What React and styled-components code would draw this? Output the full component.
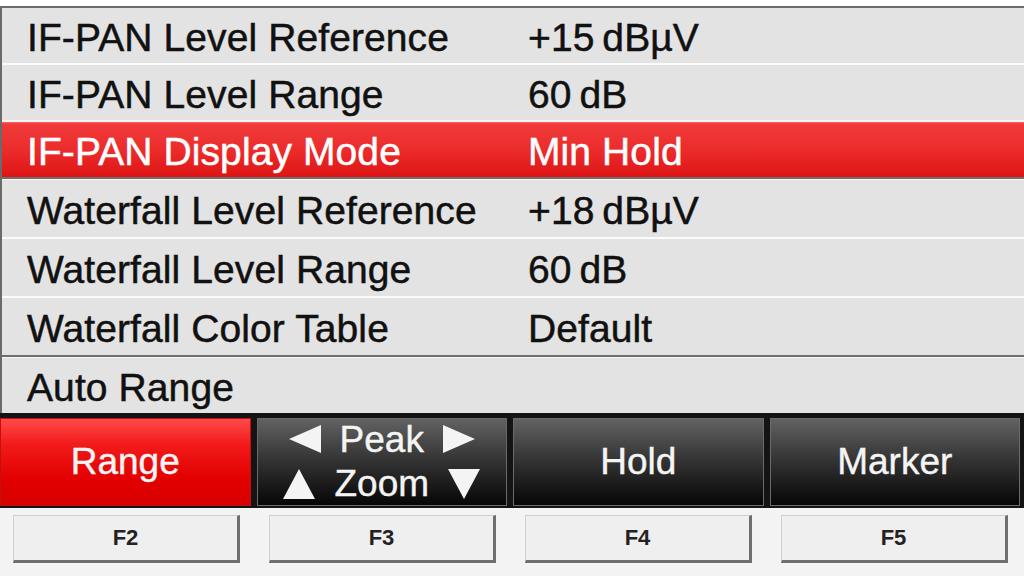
import React from "react";
import styled, { createGlobalStyle, css } from "styled-components";

const GlobalStyle = createGlobalStyle`
  html, body {
    margin: 0;
    padding: 0;
    background: #ffffff;
  }
  body {
    font-family: "Liberation Sans", Arial, sans-serif;
  }
`;

const Screen = styled.div`
  width: 1024px;
  height: 576px;
  overflow: hidden;
  display: flex;
  flex-direction: column;
  box-sizing: border-box;
  background: #f3f3f3;
  border-top: 6px solid #ffffff;
  & > * {
    flex-shrink: 0;
  }
`;

const Menu = styled.div`
  border-top: 2px solid #6c6c6c;
  border-left: 2px solid #6a6a6a;
  background: #e3e3e3;
`;

const Group = styled.div`
  ${p =>
    p.divided &&
    css`
      border-top: 2px solid #6e6e6e;
      padding-top: 1px;
      background: #f6f6f6;
    `}
`;

const Row = styled.div`
  display: grid;
  grid-template-columns: 501px 1fr;
  align-items: center;
  height: ${p => p.h}px;
  padding-left: 25px;
  padding-top: 5px;
  box-sizing: content-box;
  font-size: 39px;
  letter-spacing: 0.1px;
  -webkit-text-stroke: 0.5px currentColor;
  color: #111;
  background: #e3e3e3;
  border-top: ${p => (p.sep ? "2px solid #fbfbfb" : "none")};
  ${p =>
    p.active &&
    css`
      color: #fff;
      border-top-color: #f4f4f4;
      background: linear-gradient(#f66 0, #f03a3a 2px, #ec2c2c 50%, #de1414 100%);
    `}
`;

const SoftkeyBar = styled.div`
  display: grid;
  grid-template-columns: repeat(4, 1fr);
  grid-template-rows: 88px;
  gap: 6px;
  height: 95px;
  padding: 5px 4px 2px 0;
  box-sizing: border-box;
  background: #141414;
`;

const Softkey = styled.div`
  display: flex;
  flex-direction: column;
  align-items: center;
  justify-content: center;
  overflow: hidden;
  color: #f4f4f4;
  font-size: 37px;
  line-height: 44px;
  -webkit-text-stroke: 0.4px currentColor;
  box-sizing: border-box;
  border: 1px solid #6a6a6a;
  background: linear-gradient(#626262 0%, #363636 45%, #060606 100%);
  ${p =>
    p.active &&
    css`
      border-color: #c01010;
      background: linear-gradient(#ff4a4a 0%, #f21a1a 30%, #e20000 70%, #d80000 100%);
    `}
`;

const KeyLine = styled.div`
  display: flex;
  align-items: center;
  gap: 19px;
`;

const FKeyRow = styled.div`
  display: grid;
  grid-template-columns: repeat(4, 1fr);
  padding-top: 7px;
`;

const FKey = styled.div`
  margin: 0 16px 0 13px;
  height: 48px;
  box-sizing: border-box;
  display: flex;
  align-items: center;
  justify-content: center;
  background: #efefef;
  border-top: 1px solid #cfcfcf;
  border-left: 1px solid #cfcfcf;
  border-right: 3px solid #6f6f6f;
  border-bottom: 3px solid #6f6f6f;
  font-size: 22px;
  font-weight: bold;
  color: #222;
`;

const Tri = ({ dir }) => {
  const pts = {
    left: "0,14 32,0 32,28",
    right: "0,0 32,14 0,28",
    up: "16,0 32,30 0,30",
    down: "0,0 32,0 16,30"
  }[dir];
  return (
    <svg width="32" height="30" viewBox="0 0 32 30">
      <polygon points={pts} fill="#f4f4f4" />
    </svg>
  );
};

const groups = [
  {
    h: 50,
    rows: [
      ["IF-PAN Level Reference", "+15\u2009dBµV"],
      ["IF-PAN Level Range", "60\u2009dB"],
      ["IF-PAN Display Mode", "Min Hold", true]
    ]
  },
  {
    h: 52,
    rows: [
      ["Waterfall Level Reference", "+18\u2009dBµV"],
      ["Waterfall Level Range", "60\u2009dB"],
      ["Waterfall Color Table", "Default"]
    ]
  },
  { h: 50, rows: [["Auto Range", ""]] }
];

const App = () => (
  <>
    <GlobalStyle />
    <Screen>
      <Menu>
        {groups.map((g, gi) => (
          <Group key={gi} divided={gi > 0}>
            {g.rows.map(([label, value, active], ri) => (
              <Row key={label} active={active} sep={ri > 0} h={g.h}>
                <span>{label}</span>
                <span>{value}</span>
              </Row>
            ))}
          </Group>
        ))}
      </Menu>
      <SoftkeyBar>
        <Softkey active>Range</Softkey>
        <Softkey>
          <KeyLine>
            <Tri dir="left" />
            Peak
            <Tri dir="right" />
          </KeyLine>
          <KeyLine>
            <Tri dir="up" />
            Zoom
            <Tri dir="down" />
          </KeyLine>
        </Softkey>
        <Softkey>Hold</Softkey>
        <Softkey>Marker</Softkey>
      </SoftkeyBar>
      <FKeyRow>
        {["F2", "F3", "F4", "F5"].map(k => (
          <FKey key={k}>{k}</FKey>
        ))}
      </FKeyRow>
    </Screen>
  </>
);

export default App;
